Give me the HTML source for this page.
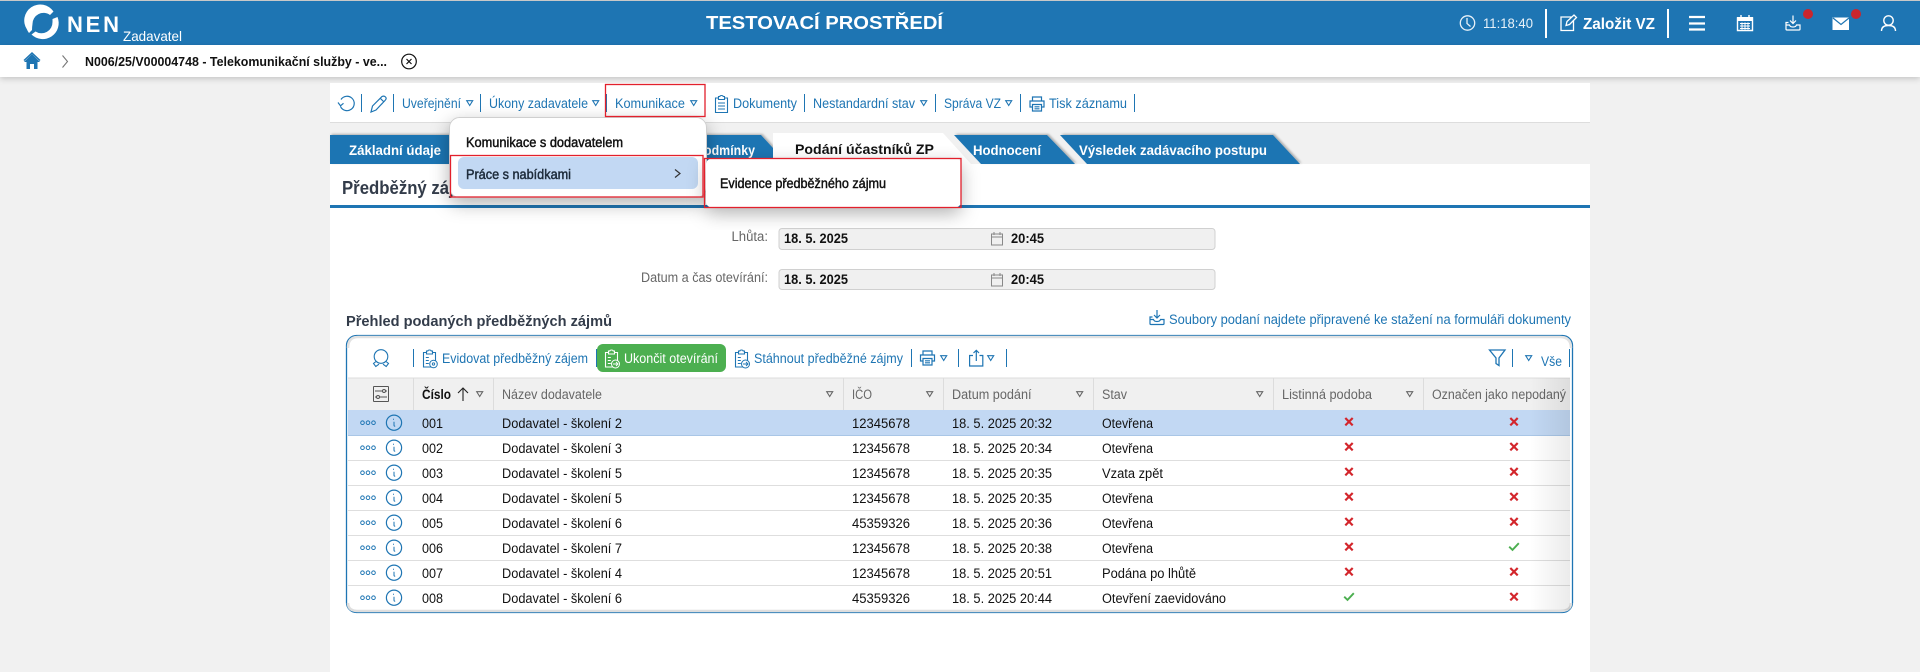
<!DOCTYPE html>
<html lang="cs"><head><meta charset="utf-8"><title>NEN</title>
<style>
html,body{margin:0;padding:0;background:#f1f1f1;width:1920px;height:672px;overflow:hidden}
svg{display:block;position:absolute;left:0;top:0}
text{font-family:"Liberation Sans",Arial,sans-serif;font-size:13.4px;white-space:pre}
.l{fill:#1e75b3}.k{fill:#111}.b{font-weight:bold}.g{fill:#666}.w{fill:#fff}
.m{stroke:#111;stroke-width:.45}
</style></head><body>
<svg width="1920" height="672" viewBox="0 0 1920 672" xmlns="http://www.w3.org/2000/svg">
<defs>
<filter id="sh1" x="-5%" y="-50%" width="110%" height="220%"><feDropShadow dx="0" dy="2" stdDeviation="3" flood-color="#000" flood-opacity=".18"/></filter>
<filter id="sh2" x="-15%" y="-25%" width="130%" height="170%"><feDropShadow dx="0" dy="6" stdDeviation="9" flood-color="#000" flood-opacity=".3"/></filter>
<filter id="tabsh" x="-5%" y="-20%" width="110%" height="130%"><feDropShadow dx="1.500" dy="-1" stdDeviation="1" flood-color="#000" flood-opacity=".28"/></filter>
<linearGradient id="fade" x1="0" x2="1" y1="0" y2="0"><stop offset="0" stop-color="#000" stop-opacity="0"/><stop offset="1" stop-color="#000" stop-opacity=".08"/></linearGradient>
<g id="tri"><path d="M.7 .7H6.7L3.7 5.5Z" fill="none" stroke="#1e75b3" stroke-width="1.100"/></g>
<g id="trig"><path d="M.7 .7H6.7L3.7 5.5Z" fill="none" stroke="#666" stroke-width="1.100"/></g>
<g id="rowi" fill="none" stroke="#1e75b3" stroke-width="1">
<circle cx="362.500" cy="0" r="1.800"/><circle cx="368" cy="0" r="1.800"/><circle cx="373.500" cy="0" r="1.800"/>
<circle cx="394" cy="0" r="7.600" stroke-width="1.200"/><path d="M393 -3.500h1M394 -1v3.500q0 1 1.200 1"/>
</g>
<g id="x"><path d="M-3.700 -3.700L3.700 3.700M3.700 -3.700L-3.700 3.700" stroke="#d3262c" stroke-width="2.200" fill="none"/></g>
<g id="c"><path d="M-4.800 0L-1.500 3.200L4.800 -3.500" stroke="#4caf50" stroke-width="1.900" fill="none"/></g>
<g id="clip" fill="none" stroke-width="1.100"><path d="M4 2.500H1.500V17H13.500V2.500H11M4.500 1H5.800Q6 0 7.500 0T9.200 1H10.500V4H4.500Z"/><path d="M3.800 7.500h3M3.800 10.500h3M3.800 13.500h3" stroke-width="1"/></g>
<g id="printer" fill="none" stroke-width="1.200"><path d="M3.500 5V1H12.500V5M3.500 11H1V5H15V11H12.500M3.500 8.500H12.500V15H3.500ZM5.500 10.800H10.500M5.500 12.800H10.500"/></g>
<g id="dl" fill="none" stroke-width="1.200"><path d="M8 0V8M5 5L8 8L11 5M3.500 7H1V13.500Q1 14.500 2 14.500H14Q15 14.500 15 13.500V9.500H11.500Q11 11.500 8 11.500T4.500 9.500H1"/></g>
<g id="cal" fill="none" stroke-width="1"><path d="M.5 2H11.500V13H.5ZM.5 5H11.500M3 0V3M9 0V3"/></g>
</defs>

<!-- header -->
<rect x="0" y="0" width="1920" height="1" fill="#c8c8c8"/>
<rect x="0" y="1" width="1920" height="44" fill="#1e75b3"/>
<path d="M27 29.500A16 16 0 0 1 53.500 11.500L50 15A11 11 0 0 0 32.500 24Q32 27 32 30L29 33Q27.500 31 27 29.500Z" fill="#fff"/>
<path d="M57.500 17A16 16 0 0 1 31.500 34.500L35.500 31.500A11 11 0 0 0 52.500 22Q52.500 21 52.500 19Z" fill="#fff"/>
<text x="67" y="32" class="w b" style="font-size:22px" textLength="52" lengthAdjust="spacing">NEN</text>
<text x="123" y="41" class="w" style="font-size:14px" textLength="59" lengthAdjust="spacingAndGlyphs">Zadavatel</text>
<text x="706" y="29" class="w b" style="font-size:18px" textLength="237" lengthAdjust="spacingAndGlyphs">TESTOVACÍ PROSTŘEDÍ</text>
<g fill="none" stroke="#e8f1f8" stroke-width="1.300">
<circle cx="1467.500" cy="23" r="7.200"/><path d="M1467 18V23.500L1470.500 26.500"/>
</g>
<text x="1483" y="28" fill="#e8f1f8" style="font-size:14px" textLength="50" lengthAdjust="spacingAndGlyphs">11:18:40</text>
<rect x="1545" y="9" width="2" height="29" fill="#fff"/>
<g fill="none" stroke="#fff" stroke-width="1.300"><path d="M1572 17H1561V30.500H1573.500V20M1566 25.500L1567 21.500L1574 15L1576.500 17.500L1569.500 24.500Z"/></g>
<text x="1583" y="29" class="w b" style="font-size:15.500px" textLength="72" lengthAdjust="spacingAndGlyphs">Založit VZ</text>
<rect x="1667" y="9" width="2" height="29" fill="#fff"/>
<path d="M1689 17H1705M1689 23.500H1705M1689 29.500H1705" stroke="#fff" stroke-width="2.200"/>
<g fill="none" stroke="#fff" stroke-width="1.400"><path d="M1737.500 18H1752.500V30.500H1737.500ZM1741 15V19M1749 15V19"/></g>
<rect x="1737" y="17" width="16" height="4" fill="#fff"/>
<path d="M1740 23.500h10M1740 26h10M1740 28.500h10M1742 22.500v7M1745 22.500v7M1748 22.500v7" stroke="#fff" stroke-width="1"/>
<use href="#dl" x="1785" y="15.500" stroke="#fff"/>
<circle cx="1808" cy="14" r="5" fill="#c9252d"/>
<path d="M1832.500 17.500H1849V30H1832.500Z" fill="#fff"/><path d="M1833 18L1841 24.500L1849 18" fill="none" stroke="#1e75b3" stroke-width="1.200"/>
<circle cx="1856" cy="14" r="5" fill="#c9252d"/>
<g fill="none" stroke="#fff" stroke-width="1.400"><circle cx="1888.500" cy="20.500" r="4.700"/><path d="M1881.500 31Q1881.500 25.500 1888.500 25.500T1895.500 31"/></g>

<!-- breadcrumb bar -->
<rect x="0" y="45" width="1920" height="32" fill="#fff" filter="url(#sh1)"/>
<path d="M24 62L32 54L40 62L37.500 62V69H34V64H30V69H26.500V62Z" fill="#1e75b3"/><path d="M24 60.500L32 53L40 60.500" fill="none" stroke="#1e75b3" stroke-width="1.500"/>
<path d="M62.500 55.500L67.500 61.500L62.500 67.500" fill="none" stroke="#777" stroke-width="1.100"/>
<text x="85" y="66" class="k b" style="font-size:12.500px" textLength="302" lengthAdjust="spacingAndGlyphs">N006/25/V00004748 - Telekomunikační služby - ve...</text>
<circle cx="409" cy="61.500" r="7.300" fill="none" stroke="#111" stroke-width="1.200"/>
<path d="M406.500 59L411.500 64M411.500 59L406.500 64" stroke="#111" stroke-width="1.200"/>

<!-- main panels -->
<rect x="330" y="83" width="1260" height="39" fill="#fff"/>
<rect x="330" y="122" width="1260" height="1" fill="#ddd"/>
<rect x="330" y="164" width="1260" height="508" fill="#fff"/>

<!-- toolbar -->
<g fill="none" stroke="#1e75b3" stroke-width="1.200">
<path d="M341 99.500A7.200 7.200 0 1 1 340.500 106.500M338 102.500L340.500 105.800L343.500 103.300"/>
<path d="M371 112L372.500 106L382 96.500Q384 95.500 385.500 97T385 100.500L376 110Z M380.500 98.500L383.500 101.500"/>
</g>
<g fill="#1e75b3"><rect x="361" y="94" width="1" height="18"/><rect x="393" y="94" width="1" height="18"/><rect x="480" y="94" width="1" height="18"/><rect x="606" y="94" width="1" height="18"/><rect x="804" y="94" width="1" height="18"/><rect x="935" y="94" width="1" height="18"/><rect x="1020" y="94" width="1" height="18"/><rect x="1134" y="94" width="1" height="18"/></g>
<text x="402" y="108" class="l" textLength="59" lengthAdjust="spacingAndGlyphs">Uveřejnění</text><use href="#tri" x="466" y="100"/>
<text x="489" y="108" class="l" textLength="99" lengthAdjust="spacingAndGlyphs">Úkony zadavatele</text><use href="#tri" x="592" y="100"/>
<text x="615" y="108" class="l" textLength="70" lengthAdjust="spacingAndGlyphs">Komunikace</text><use href="#tri" x="690" y="100"/>
<g fill="none" stroke="#1e75b3" stroke-width="1.100"><path d="M718 98H715.500V112.500H727.500V98H725M718.500 96.500H719.800Q720 95.500 721.500 95.500T723.200 96.500H724.500V99.500H718.500Z"/><path d="M718 103h7M718 106h7M718 109h7" stroke-width="1"/></g>
<text x="733" y="108" class="l" textLength="64" lengthAdjust="spacingAndGlyphs">Dokumenty</text>
<text x="813" y="108" class="l" textLength="102" lengthAdjust="spacingAndGlyphs">Nestandardní stav</text><use href="#tri" x="920" y="100"/>
<text x="944" y="108" class="l" textLength="57" lengthAdjust="spacingAndGlyphs">Správa VZ</text><use href="#tri" x="1005" y="100"/>
<use href="#printer" x="1029" y="96" stroke="#1e75b3"/>
<text x="1049" y="108" class="l" textLength="78" lengthAdjust="spacingAndGlyphs">Tisk záznamu</text>

<!-- tabs -->
<polygon points="1060,135 1273,135 1300,164 1087,164" fill="#1e75b3" filter="url(#tabsh)"/>
<polygon points="954,135 1047,135 1075,164 981,164" fill="#1e75b3" filter="url(#tabsh)"/>
<polygon points="330,135 761,135 773,148 773,164 330,164" fill="#1e75b3" filter="url(#tabsh)"/>
<polygon points="773,133 943,133 971,164 773,164" fill="#fff"/>
<text x="349" y="155" class="w b" textLength="92" lengthAdjust="spacingAndGlyphs">Základní údaje</text>
<text x="640" y="155" class="w b" textLength="115" lengthAdjust="spacingAndGlyphs">Zadávací podmínky</text>
<text x="795" y="154" class="k b" style="font-size:14px" textLength="139" lengthAdjust="spacingAndGlyphs">Podání účastníků ZP</text>
<text x="973" y="155" class="w b" textLength="68" lengthAdjust="spacingAndGlyphs">Hodnocení</text>
<text x="1079" y="155" class="w b" textLength="188" lengthAdjust="spacingAndGlyphs">Výsledek zadávacího postupu</text>

<!-- heading -->
<text x="342" y="194" class="b" fill="#333c4a" style="font-size:18px" textLength="136" lengthAdjust="spacingAndGlyphs">Předběžný zájem</text>
<rect x="330" y="205" width="1260" height="3" fill="#1e75b3"/>

<!-- form -->
<text x="731.500" y="241" class="g" textLength="36.500" lengthAdjust="spacingAndGlyphs">Lhůta:</text>
<text x="641" y="282" class="g" textLength="127" lengthAdjust="spacingAndGlyphs">Datum a čas otevírání:</text>
<rect x="779" y="228.500" width="436" height="21" rx="3" fill="#f0f0f0" stroke="#d0d0d0"/>
<rect x="779" y="269.500" width="436" height="20" rx="3" fill="#f0f0f0" stroke="#d0d0d0"/>
<text x="784" y="243" class="k b" textLength="64" lengthAdjust="spacingAndGlyphs">18. 5. 2025</text>
<text x="1011" y="243" class="k b" textLength="33" lengthAdjust="spacingAndGlyphs">20:45</text>
<text x="784" y="284" class="k b" textLength="64" lengthAdjust="spacingAndGlyphs">18. 5. 2025</text>
<text x="1011" y="284" class="k b" textLength="33" lengthAdjust="spacingAndGlyphs">20:45</text>
<use href="#cal" x="991" y="232" stroke="#888"/>
<use href="#cal" x="991" y="273" stroke="#888"/>

<text x="346" y="326" class="b" fill="#333c4a" style="font-size:15px" textLength="266" lengthAdjust="spacingAndGlyphs">Přehled podaných předběžných zájmů</text>
<use href="#dl" x="1149" y="310" stroke="#1e75b3"/>
<text x="1169" y="324" class="l" textLength="402" lengthAdjust="spacingAndGlyphs">Soubory podaní najdete připravené ke stažení na formuláři dokumenty</text>

<!-- grid container -->
<rect x="346.500" y="335.500" width="1226" height="277" rx="10" fill="#fff" stroke="#1e75b3" stroke-width="1.300"/>
<path d="M348 348Q348 337 358 337H1560Q1571 337 1571 348" fill="none" stroke="#e2e2e2" stroke-width="2.500"/>
<path d="M348 603Q348 611 358 611H1560Q1571 611 1571 603" fill="none" stroke="#dedede" stroke-width="2.500"/>

<!-- grid toolbar -->
<g fill="none" stroke="#1e75b3" stroke-width="1.100">
<circle cx="381" cy="356.500" r="6.800"/>
<path d="M376 361.500L373.500 363.500L375.800 366.500L379 364.200M386 361.500L388.500 363.500L386.200 366.500L383 364.200"/>
<path d="M1489.500 350H1505L1499 358V365.500L1496 363.500V358Z" stroke-width="1.300"/>
<path d="M973 355.500H969.600V366H982.800V355.500H979.500M976.300 361V350.500M973.500 353L976.300 350.300L979 353" stroke-width="1.200"/>
</g>
<g fill="#1e75b3"><rect x="413" y="349" width="1" height="18"/><rect x="596" y="349" width="1" height="18"/><rect x="911" y="349" width="1" height="18"/><rect x="958" y="349" width="1" height="18"/><rect x="1006" y="349" width="1" height="18"/><rect x="1512" y="349" width="1" height="18"/><rect x="1569" y="349" width="1" height="18"/></g>
<use href="#clip" x="422" y="350" stroke="#1e75b3"/><circle cx="433.500" cy="364" r="3.800" fill="#fff" stroke="#1e75b3"/><circle cx="433.500" cy="364" r="1.200" fill="none" stroke="#1e75b3" stroke-width=".9"/>
<text x="442" y="363" class="l" textLength="146" lengthAdjust="spacingAndGlyphs">Evidovat předběžný zájem</text>
<rect x="597" y="344" width="129" height="28" rx="6" fill="#4caf50"/>
<use href="#clip" x="604" y="350" stroke="#fff"/><circle cx="615.500" cy="364" r="4" fill="#4caf50" stroke="#fff"/><path d="M613 364h5M616 362l2 2-2 2" stroke="#fff" fill="none" stroke-width=".9"/>
<text x="624" y="363" class="w" textLength="94" lengthAdjust="spacingAndGlyphs">Ukončit otevírání</text>
<use href="#clip" x="734" y="350" stroke="#1e75b3"/><circle cx="745.500" cy="364" r="4" fill="#fff" stroke="#1e75b3"/><path d="M743 364h5M746 362l2 2-2 2" stroke="#1e75b3" fill="none" stroke-width=".9"/>
<text x="754" y="363" class="l" textLength="149" lengthAdjust="spacingAndGlyphs">Stáhnout předběžné zájmy</text>
<use href="#printer" x="919.500" y="350" stroke="#1e75b3"/><use href="#tri" x="940" y="355"/><use href="#tri" x="987" y="355"/>
<use href="#tri" x="1525" y="355"/>
<text x="1541" y="366" class="l" textLength="21" lengthAdjust="spacingAndGlyphs">Vše</text>

<!-- grid header -->
<rect x="348" y="378" width="1222" height="32" fill="#f0f0f0"/>
<rect x="348" y="377.500" width="1222" height="1" fill="#dcdcdc"/>
<g fill="#dcdcdc"><rect x="413" y="378" width="1" height="32"/><rect x="493" y="378" width="1" height="32"/><rect x="843" y="378" width="1" height="32"/><rect x="943" y="378" width="1" height="32"/><rect x="1093" y="378" width="1" height="32"/><rect x="1273" y="378" width="1" height="32"/><rect x="1423" y="378" width="1" height="32"/></g>
<g fill="none" stroke="#555" stroke-width="1"><rect x="373.500" y="386.500" width="15" height="15" rx=".5"/><path d="M375 391H387M375 397H387"/><circle cx="384" cy="391" r="1.500" fill="#f0f0f0"/><circle cx="378" cy="397" r="1.500" fill="#f0f0f0"/></g>
<text x="422" y="399" class="k b" textLength="29" lengthAdjust="spacingAndGlyphs">Číslo</text>
<path d="M463 401V388M458 393L463 388L468 393" fill="none" stroke="#222" stroke-width="1.100"/>
<use href="#trig" x="476" y="391"/>
<text x="502" y="399" class="g" textLength="100" lengthAdjust="spacingAndGlyphs">Název dodavatele</text><use href="#trig" x="826" y="391"/>
<text x="852" y="399" class="g" textLength="20" lengthAdjust="spacingAndGlyphs">IČO</text><use href="#trig" x="926" y="391"/>
<text x="952" y="399" class="g" textLength="79.500" lengthAdjust="spacingAndGlyphs">Datum podání</text><use href="#trig" x="1076" y="391"/>
<text x="1102" y="399" class="g" textLength="25" lengthAdjust="spacingAndGlyphs">Stav</text><use href="#trig" x="1256" y="391"/>
<text x="1282" y="399" class="g" textLength="90" lengthAdjust="spacingAndGlyphs">Listinná podoba</text><use href="#trig" x="1406" y="391"/>
<text x="1432" y="399" class="g" textLength="134" lengthAdjust="spacingAndGlyphs">Označen jako nepodaný</text>

<!-- rows -->
<rect x="348" y="410" width="1222" height="25" fill="#c2d8f3"/>
<rect x="348" y="435" width="1222" height="1" fill="#a9c6e6"/>
<g fill="#dedede"><rect x="348" y="460" width="1222" height="1"/><rect x="348" y="485" width="1222" height="1"/><rect x="348" y="510" width="1222" height="1"/><rect x="348" y="535" width="1222" height="1"/><rect x="348" y="560" width="1222" height="1"/><rect x="348" y="585" width="1222" height="1"/></g>
<use href="#rowi" y="422.700"/><use href="#rowi" y="447.700"/><use href="#rowi" y="472.700"/><use href="#rowi" y="497.700"/><use href="#rowi" y="522.700"/><use href="#rowi" y="547.700"/><use href="#rowi" y="572.700"/><use href="#rowi" y="597.700"/>

<g class="k">
<text x="422" y="428" textLength="21" lengthAdjust="spacingAndGlyphs">001</text><text x="502" y="428" textLength="120" lengthAdjust="spacingAndGlyphs">Dodavatel - školení 2</text><text x="852" y="428" textLength="58" lengthAdjust="spacingAndGlyphs">12345678</text><text x="952" y="428" textLength="100" lengthAdjust="spacingAndGlyphs">18. 5. 2025 20:32</text><text x="1102" y="428" textLength="51" lengthAdjust="spacingAndGlyphs">Otevřena</text>
<text x="422" y="453" textLength="21" lengthAdjust="spacingAndGlyphs">002</text><text x="502" y="453" textLength="120" lengthAdjust="spacingAndGlyphs">Dodavatel - školení 3</text><text x="852" y="453" textLength="58" lengthAdjust="spacingAndGlyphs">12345678</text><text x="952" y="453" textLength="100" lengthAdjust="spacingAndGlyphs">18. 5. 2025 20:34</text><text x="1102" y="453" textLength="51" lengthAdjust="spacingAndGlyphs">Otevřena</text>
<text x="422" y="478" textLength="21" lengthAdjust="spacingAndGlyphs">003</text><text x="502" y="478" textLength="120" lengthAdjust="spacingAndGlyphs">Dodavatel - školení 5</text><text x="852" y="478" textLength="58" lengthAdjust="spacingAndGlyphs">12345678</text><text x="952" y="478" textLength="100" lengthAdjust="spacingAndGlyphs">18. 5. 2025 20:35</text><text x="1102" y="478" textLength="61" lengthAdjust="spacingAndGlyphs">Vzata zpět</text>
<text x="422" y="503" textLength="21" lengthAdjust="spacingAndGlyphs">004</text><text x="502" y="503" textLength="120" lengthAdjust="spacingAndGlyphs">Dodavatel - školení 5</text><text x="852" y="503" textLength="58" lengthAdjust="spacingAndGlyphs">12345678</text><text x="952" y="503" textLength="100" lengthAdjust="spacingAndGlyphs">18. 5. 2025 20:35</text><text x="1102" y="503" textLength="51" lengthAdjust="spacingAndGlyphs">Otevřena</text>
<text x="422" y="528" textLength="21" lengthAdjust="spacingAndGlyphs">005</text><text x="502" y="528" textLength="120" lengthAdjust="spacingAndGlyphs">Dodavatel - školení 6</text><text x="852" y="528" textLength="58" lengthAdjust="spacingAndGlyphs">45359326</text><text x="952" y="528" textLength="100" lengthAdjust="spacingAndGlyphs">18. 5. 2025 20:36</text><text x="1102" y="528" textLength="51" lengthAdjust="spacingAndGlyphs">Otevřena</text>
<text x="422" y="553" textLength="21" lengthAdjust="spacingAndGlyphs">006</text><text x="502" y="553" textLength="120" lengthAdjust="spacingAndGlyphs">Dodavatel - školení 7</text><text x="852" y="553" textLength="58" lengthAdjust="spacingAndGlyphs">12345678</text><text x="952" y="553" textLength="100" lengthAdjust="spacingAndGlyphs">18. 5. 2025 20:38</text><text x="1102" y="553" textLength="51" lengthAdjust="spacingAndGlyphs">Otevřena</text>
<text x="422" y="578" textLength="21" lengthAdjust="spacingAndGlyphs">007</text><text x="502" y="578" textLength="120" lengthAdjust="spacingAndGlyphs">Dodavatel - školení 4</text><text x="852" y="578" textLength="58" lengthAdjust="spacingAndGlyphs">12345678</text><text x="952" y="578" textLength="100" lengthAdjust="spacingAndGlyphs">18. 5. 2025 20:51</text><text x="1102" y="578" textLength="94" lengthAdjust="spacingAndGlyphs">Podána po lhůtě</text>
<text x="422" y="603" textLength="21" lengthAdjust="spacingAndGlyphs">008</text><text x="502" y="603" textLength="120" lengthAdjust="spacingAndGlyphs">Dodavatel - školení 6</text><text x="852" y="603" textLength="58" lengthAdjust="spacingAndGlyphs">45359326</text><text x="952" y="603" textLength="100" lengthAdjust="spacingAndGlyphs">18. 5. 2025 20:44</text><text x="1102" y="603" textLength="124" lengthAdjust="spacingAndGlyphs">Otevření zaevidováno</text>
</g>
<use href="#x" x="1349" y="421.700"/><use href="#x" x="1514" y="421.700"/>
<use href="#x" x="1349" y="446.700"/><use href="#x" x="1514" y="446.700"/>
<use href="#x" x="1349" y="471.700"/><use href="#x" x="1514" y="471.700"/>
<use href="#x" x="1349" y="496.700"/><use href="#x" x="1514" y="496.700"/>
<use href="#x" x="1349" y="521.700"/><use href="#x" x="1514" y="521.700"/>
<use href="#x" x="1349" y="546.700"/><use href="#c" x="1514" y="546.700"/>
<use href="#x" x="1349" y="571.700"/><use href="#x" x="1514" y="571.700"/>
<use href="#c" x="1349" y="596.700"/><use href="#x" x="1514" y="596.700"/>
<rect x="1530" y="378" width="40" height="232" fill="url(#fade)"/>

<!-- dropdown menu -->
<rect x="449.500" y="117.500" width="257" height="80" rx="10" fill="#fff" stroke="#cfcfcf" filter="url(#sh2)"/>
<text x="466" y="147" class="k m" textLength="157" lengthAdjust="spacingAndGlyphs">Komunikace s dodavatelem</text>
<rect x="458" y="157" width="240" height="32" rx="6" fill="#c2d8f3"/>
<text x="466" y="179" fill="#1d2b3a" stroke="#1d2b3a" stroke-width=".45" textLength="105" lengthAdjust="spacingAndGlyphs">Práce s nabídkami</text>
<path d="M675 169.500L680 173.500L675 177.500" fill="none" stroke="#333" stroke-width="1.200"/>
<rect x="706" y="158.500" width="255" height="49" rx="6" fill="#fff" filter="url(#sh2)"/>
<text x="720" y="188" class="k m" textLength="166" lengthAdjust="spacingAndGlyphs">Evidence předběžného zájmu</text>

<!-- red highlight boxes -->
<g fill="none" stroke="#e2202c" stroke-width="1.300">
<rect x="605.500" y="84.500" width="99.500" height="32"/>
<rect x="450.500" y="155.500" width="252.500" height="41.500"/>
<rect x="704.500" y="158.500" width="256.500" height="49"/>
</g>
</svg>
</body></html>
